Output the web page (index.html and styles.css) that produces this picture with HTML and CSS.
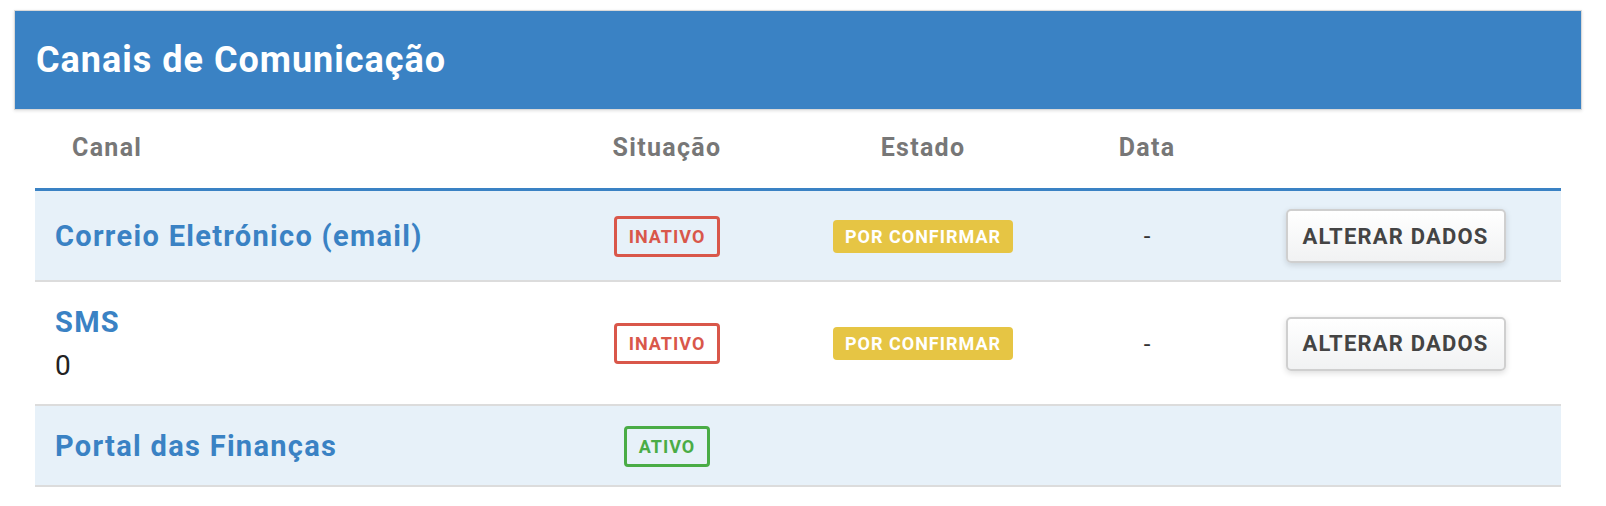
FILE: index.html
```html
<!DOCTYPE html>
<html lang="pt">
<head>
<meta charset="utf-8">
<title>Canais de Comunicação</title>
<link rel="stylesheet" href="styles.css">
</head>
<body>
<div class="page">
  <div class="panel-heading">
    <h1 class="panel-title">Canais de Comunicação</h1>
  </div>
  <table class="channels">
    <colgroup>
      <col class="c-canal">
      <col class="c-sit">
      <col class="c-est">
      <col class="c-data">
      <col class="c-act">
    </colgroup>
    <thead>
      <tr>
        <th class="th-canal">Canal</th>
        <th>Situação</th>
        <th>Estado</th>
        <th>Data</th>
        <th></th>
      </tr>
    </thead>
    <tbody>
      <tr class="odd">
        <td class="td-canal"><span class="canal-name">Correio Eletrónico (email)</span></td>
        <td class="center"><span class="badge badge-red">INATIVO</span></td>
        <td class="center"><span class="label-yellow">POR CONFIRMAR</span></td>
        <td class="center dash">-</td>
        <td class="center"><button class="btn">ALTERAR DADOS</button></td>
      </tr>
      <tr>
        <td class="td-canal"><span class="canal-name">SMS</span><div class="canal-value">0</div></td>
        <td class="center"><span class="badge badge-red">INATIVO</span></td>
        <td class="center"><span class="label-yellow">POR CONFIRMAR</span></td>
        <td class="center dash">-</td>
        <td class="center"><button class="btn">ALTERAR DADOS</button></td>
      </tr>
      <tr class="odd">
        <td class="td-canal"><span class="canal-name">Portal das Finanças</span></td>
        <td class="center"><span class="badge badge-green">ATIVO</span></td>
        <td></td>
        <td></td>
        <td></td>
      </tr>
    </tbody>
  </table>
</div>
</body>
</html>
```

FILE: styles.css
```css
html, body {
  margin: 0;
  padding: 0;
  background: #fff;
}
body {
  font-family: Roboto, "Liberation Sans", Arial, sans-serif;
  color: #333;
}
.page {
  width: 1568px;
  margin: 10px 0 0 14px;
}
.panel-heading {
  background: #3a82c4;
  border: 1px solid #d9d9d9;
  box-shadow: 0 1px 3px rgba(0,0,0,0.12);
  height: 98px;
  display: flex;
  align-items: center;
  padding-left: 21px;
}
.panel-title {
  margin: 0;
  color: #fff;
  font-size: 36px;
  font-weight: 700;
  letter-spacing: 1px;
  line-height: 40px;
}
.channels {
  width: 1526px;
  margin: 0 21px;
  border-collapse: collapse;
  table-layout: fixed;
}
.c-canal { width: 525px; }
.c-sit { width: 214px; }
.c-est { width: 298px; }
.c-data { width: 150px; }
.c-act { width: 339px; }

.channels th {
  color: #777;
  font-size: 25px;
  font-weight: 700;
  letter-spacing: 1.3px;
  line-height: 34px;
  padding: 21px 0 23px;
  text-align: center;
  border-bottom: 3px solid #3a82c4;
}
.channels th.th-canal {
  text-align: left;
  padding-left: 37px;
}
.channels td {
  padding: 18px 0 17px;
  border-bottom: 2px solid #dcdcdc;
  vertical-align: middle;
}
.channels tr.odd td {
  background: #e7f1f9;
}
.td-canal {
  padding-left: 20px !important;
}
.canal-name {
  color: #3a82c4;
  font-size: 29px;
  font-weight: 700;
  letter-spacing: 1.3px;
  line-height: 44px;
}
.canal-value {
  font-size: 28px;
  line-height: 43px;
  color: #222;
}
.center {
  text-align: center;
}
.dash {
  font-size: 24px;
  color: #333;
}
.badge {
  display: inline-block;
  box-sizing: border-box;
  height: 41px;
  line-height: 35px;
  padding: 0 12px;
  border: 3px solid;
  border-radius: 4px;
  font-size: 18px;
  font-weight: 700;
  letter-spacing: 1px;
  vertical-align: middle;
}
.badge-red {
  color: #d9574a;
  border-color: #d9574a;
}
.badge-green {
  color: #4aac46;
  border-color: #4aac46;
}
.label-yellow {
  display: inline-block;
  height: 33px;
  line-height: 33px;
  padding: 0 12px;
  background: #e6c544;
  color: #fff;
  border-radius: 4px;
  font-size: 18px;
  font-weight: 700;
  letter-spacing: 1px;
  vertical-align: middle;
}
.btn {
  box-sizing: border-box;
  width: 220px;
  height: 54px;
  margin-left: 8px;
  padding: 0;
  border: 2px solid #cfcfcf;
  border-radius: 5px;
  background: linear-gradient(#ffffff, #f1f2f3);
  box-shadow: 0 2px 6px rgba(0,0,0,0.14);
  color: #444;
  font-family: Roboto, "Liberation Sans", Arial, sans-serif;
  font-size: 22px;
  font-weight: 700;
  letter-spacing: 1.2px;
  vertical-align: middle;
  cursor: pointer;
}
```
